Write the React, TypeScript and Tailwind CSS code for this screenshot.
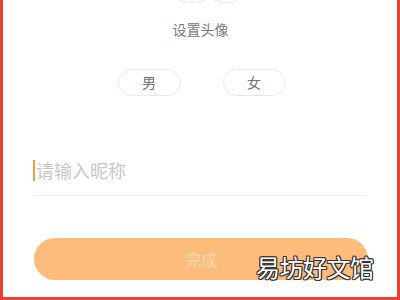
import React from "react";

export default function App() {
  return (
    <div
      className="relative w-[400px] h-[300px] bg-white overflow-hidden border-l-[3px] border-r-[3px] border-b-[3px] border-[#e8432b]"
      style={{ fontFamily: '"Noto Sans CJK SC", "Noto Sans", sans-serif' }}
    >
      <div className="flex flex-col items-center">
        <div className="relative h-[4px] w-full">
          <div className="absolute left-[149px] top-[-77px] w-[80px] h-[80px] rounded-full border border-[#e6e6e6]" />
          <div className="absolute left-[195px] top-[-53px] w-[56px] h-[56px] rounded-full border border-[#e6e6e6] bg-white" />
        </div>
        <div className="mt-[15px] text-[14px] leading-[20px] text-[#7a7a7a] ml-[1px]">设置头像</div>
        <div className="mt-[30px] flex gap-[42px] ml-[3px]">
          <div className="w-[63px] h-[27px] rounded-full border border-[#e8e8e8] flex items-center justify-center text-[14px] text-[#707070]">男</div>
          <div className="w-[63px] h-[27px] rounded-full border border-[#e8e8e8] flex items-center justify-center text-[14px] text-[#707070]">女</div>
        </div>
      </div>
      <div className="mt-[63px] ml-[30px] mr-[30px] border-b border-[#eeeeee] h-[37px] flex items-start">
        <div className="w-[2px] h-[21px] bg-[#f0a040] mt-[1px]" />
        <div className="text-[18px] leading-[22px] text-[#c8c8c8] ml-[1px]">请输入昵称</div>
      </div>
      <div className="mt-[42px] ml-[31px] mr-[29px] h-[42px] rounded-full bg-[#fdbb7c] flex items-center justify-center text-[16px] text-[#fed9b3]">
        完成
      </div>
      <div
        className="absolute left-[253px] top-[252px] text-[24px] leading-[30px] text-white tracking-[-0.5px]"
        style={{ textShadow: "1px 0 #333, -1px 0 #333, 0 1px #333, 0 -1px #333, 1px 1px #333, -1px -1px #333, 1px -1px #333, -1px 1px #333" }}
      >
        易坊好文馆
      </div>
    </div>
  );
}
